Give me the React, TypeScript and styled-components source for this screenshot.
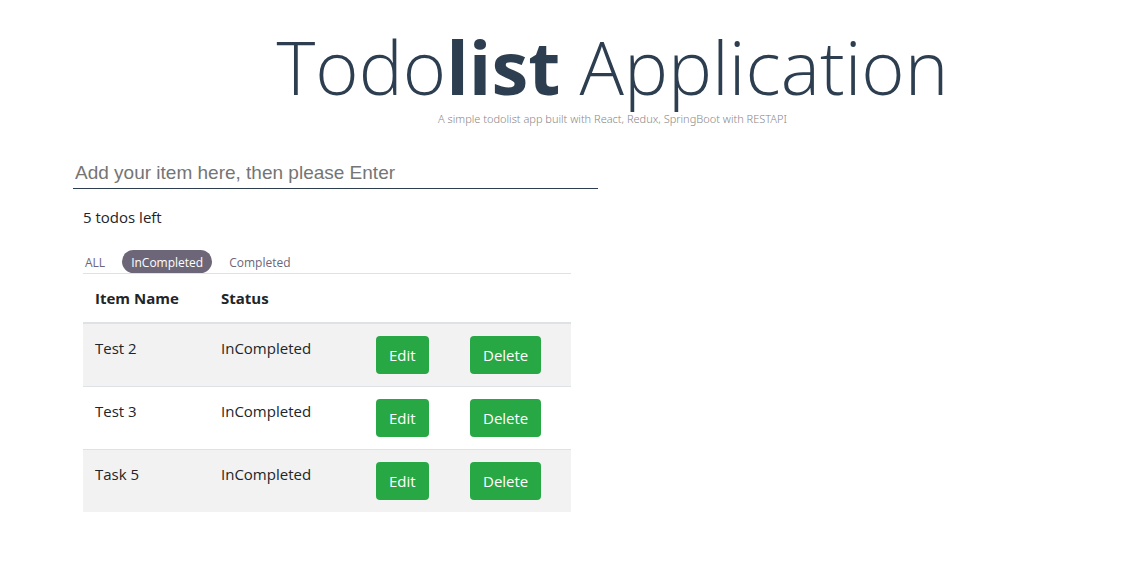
import React, { useState } from "react";
import styled, { createGlobalStyle } from "styled-components";

const GlobalStyle = createGlobalStyle`
  *, *::before, *::after { box-sizing: border-box; }
  body {
    margin: 0;
    background: #fff;
    color: #212529;
    font-family: "Open Sans", "Noto Sans", sans-serif;
    font-size: 15px;
    line-height: 24px;
  }
`;

const Page = styled.div`
  padding: 23px 1px 48px 73px;
`;

const Header = styled.header`
  margin-left: 29px;
  text-align: center;
  font-weight: 300;
`;

const Title = styled.h1`
  margin: 0;
  color: #2c3e50;
  font-size: 74px;
  font-weight: 300;
  line-height: 88px;
  white-space: nowrap;

  strong {
    font-weight: 700;
  }
`;

const Subtitle = styled.p`
  margin: 0;
  color: #888;
  font-family: "Noto Sans", "Open Sans", sans-serif;
  font-size: 11px;
  line-height: 16px;
`;

const Main = styled.main`
  width: 50%;
  margin-top: 33px;
`;

const NewItem = styled.input`
  display: block;
  width: 100%;
  height: 29px;
  padding: 0 2px 2px;
  border: 0;
  border-bottom: 1px solid #2c3e50;
  outline: 0;
  background: transparent;
  color: #212529;
  font-family: "Liberation Sans", Arial, sans-serif;
  font-size: 19px;

  &::placeholder {
    color: #757575;
    opacity: 1;
  }
`;

const ListSection = styled.section`
  margin: 16px 27px 0 10px;
`;

const Count = styled.p`
  margin: 0;
`;

const Filters = styled.nav`
  display: flex;
  gap: 8px;
  margin: 21px 0 0 -7px;
`;

const FilterButton = styled.button<{ $active: boolean }>`
  height: 23px;
  padding: 2px 9px 0;
  border: 0;
  border-radius: 12px;
  background: ${(p) => (p.$active ? "#6c6678" : "transparent")};
  color: ${(p) => (p.$active ? "#fff" : "#6c6678")};
  font-family: inherit;
  font-size: 12px;
  line-height: 21px;
  cursor: pointer;
`;

const Table = styled.table`
  width: 100%;
  border-collapse: collapse;
  table-layout: fixed;
`;

const HeadCell = styled.th<{ $width: number }>`
  width: ${(p) => p.$width}px;
  padding: 12px;
  border-top: 1px solid #dee2e6;
  border-bottom: 2px solid #dee2e6;
  font-weight: 700;
  text-align: left;
`;

const Row = styled.tr`
  &:nth-child(odd) {
    background: #f2f2f2;
  }
`;

const Cell = styled.td`
  padding: 12px;
  border-top: 1px solid #dee2e6;
  vertical-align: top;
`;

const ActionButton = styled.button`
  display: block;
  height: 38px;
  padding: 0 13px;
  border: 0;
  border-radius: 4px;
  background: #28a745;
  color: #fff;
  font-family: inherit;
  font-size: 15px;
  line-height: 24px;
  cursor: pointer;
`;

const filters = ["ALL", "InCompleted", "Completed"];
const todos = ["Test 2", "Test 3", "Task 5"];

export default function App() {
  const [filter, setFilter] = useState("InCompleted");
  const visible = filter === "Completed" ? [] : todos;

  return (
    <Page>
      <GlobalStyle />
      <Header>
        <Title>
          Todo<strong>list</strong> Application
        </Title>
        <Subtitle>A simple todolist app built with React, Redux, SpringBoot with RESTAPI</Subtitle>
      </Header>
      <Main>
        <NewItem
          type="text"
          aria-label="New item"
          placeholder="Add your item here, then please Enter"
        />
        <ListSection>
          <Count>5 todos left</Count>
          <Filters aria-label="Filter items">
            {filters.map((name) => (
              <FilterButton
                key={name}
                type="button"
                $active={name === filter}
                aria-pressed={name === filter}
                onClick={() => setFilter(name)}
              >
                {name}
              </FilterButton>
            ))}
          </Filters>
          <Table>
            <thead>
              <tr>
                <HeadCell $width={126}>Item Name</HeadCell>
                <HeadCell $width={155}>Status</HeadCell>
                <HeadCell $width={94} aria-label="Edit" />
                <HeadCell $width={113} aria-label="Delete" />
              </tr>
            </thead>
            <tbody>
              {visible.map((name) => (
                <Row key={name}>
                  <Cell>{name}</Cell>
                  <Cell>InCompleted</Cell>
                  <Cell>
                    <ActionButton type="button">Edit</ActionButton>
                  </Cell>
                  <Cell>
                    <ActionButton type="button">Delete</ActionButton>
                  </Cell>
                </Row>
              ))}
            </tbody>
          </Table>
        </ListSection>
      </Main>
    </Page>
  );
}
